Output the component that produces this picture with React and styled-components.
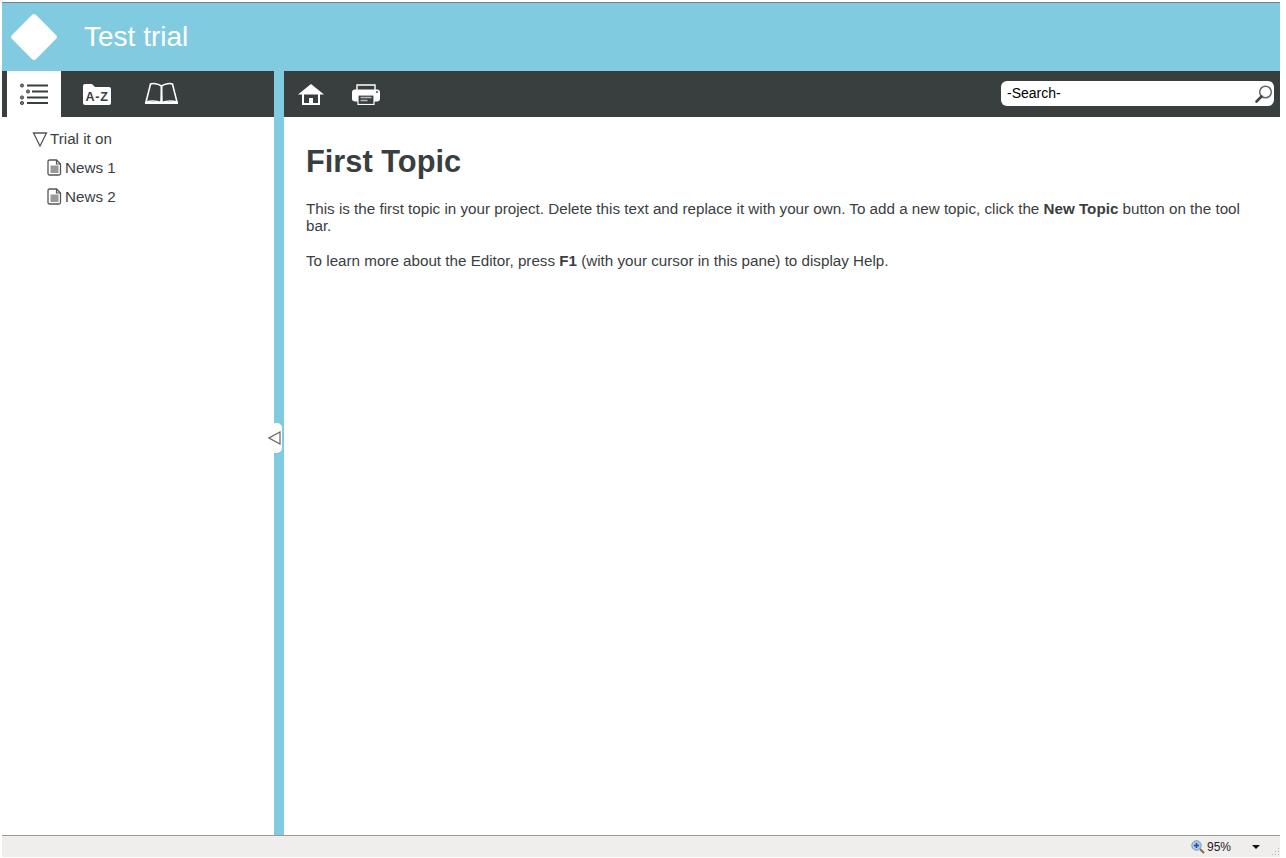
import React from "react";
import styled, { createGlobalStyle } from "styled-components";

const Global = createGlobalStyle`
  html, body { margin: 0; padding: 0; background: #fff; overflow: hidden; }
  body { font-family: "Liberation Sans", Arial, sans-serif; }
  * { box-sizing: border-box; }
`;
const Page = styled.div`
  width: 1286px; height: 858px; padding: 2px 6px 1px 2px;
  display: flex; flex-direction: column; background: #fff;
`;
const Header = styled.header`
  height: 69px; flex: none; background: #81cbe1; border-top: 1px solid #7d7d85;
  display: flex; align-items: center; padding: 0 0 0 7px; gap: 25px; color: #fff;
`;
const Logo = styled.svg`width: 50px; height: 50px; display: block; flex: none;`;
const Title = styled.h1`margin: 0; font-size: 28px; font-weight: 400; line-height: 32px;`;
const Toolbars = styled.div`height: 46px; flex: none; display: flex; background: #393e3f;`;
const NavTabs = styled.nav`
  width: 272px; flex: none; display: flex; padding-left: 5px;
`;
const Tab = styled.div`
  width: ${p => p.$w}px; height: 46px; display: flex; align-items: center; justify-content: center;
  background: ${p => p.$active ? "#fff" : "transparent"};
`;
const Main = styled.div`flex: 1; display: flex; min-height: 0;`;
const ToolArea = styled.div`
  flex: 1; display: flex; align-items: center; padding: 0 6px 0 10px; border-left: 10px solid #81cbe1;
`;
const ToolIcon = styled.div`
  width: ${p => p.$w}px; height: 46px; display: flex; align-items: center; justify-content: center; flex: none;
`;
const SearchBox = styled.div`
  width: 273px; height: 25px; margin-left: auto; margin-bottom: 1px; border-radius: 6px; background: #fff;
  display: flex; align-items: center; justify-content: space-between; padding: 0 0 2px 6px;
  color: #000; font-size: 14px;
`;
const SearchIcon = styled.svg`width: 20px; height: 20px; flex: none; margin-bottom: -2px;`;
const Sidebar = styled.aside`
  width: 272px; flex: none; padding-top: 7px; position: relative; color: #393e3f; font-size: 15.2px;
`;
const TreeRow = styled.div`
  height: 29px; display: flex; align-items: center; padding-left: ${p => p.$indent}px; gap: ${p => p.$gap}px;
`;
const Handle = styled.div`
  position: absolute; right: -8px; top: 306px; width: 15px; height: 30px; background: #fff;
  border-radius: 0 5px 5px 0; display: flex; align-items: center; justify-content: center;
`;
const Splitter = styled.div`width: 10px; flex: none; background: #81cbe1;`;
const Content = styled.main`flex: 1; padding: 26px 30px 0 22px; color: #393e3f; font-size: 15.2px; line-height: 17px;`;
const Heading = styled.h2`margin: 0 0 19px; font-size: 30.8px; line-height: 38px; font-weight: 700;`;
const Para = styled.p`margin: 0 0 18px;`;
const StatusBar = styled.footer`
  height: 22px; flex: none; background: #f0eded; border-top: 1px solid #9a9a9a;
  display: flex; align-items: center; justify-content: flex-end; color: #222; font-size: 12px;
`;
const Zoom = styled.div`display: flex; align-items: center; gap: 2px; margin-right: 21px;`;
const Caret = styled.div`
  width: 0; height: 0; border-left: 4px solid transparent; border-right: 4px solid transparent;
  border-top: 4px solid #111; margin-right: 20px;
`;
const Grip = styled.svg`width: 8px; height: 8px; position: absolute; right: 6px; bottom: 2px;`;

const FileIcon = () => (
  <svg width="15" height="17" viewBox="0 0 15 17">
    <path d="M2.500 1h7l4 4v9.500a1.500 1.500 0 0 1-1.500 1.500H2.500A1.500 1.500 0 0 1 1 14.500v-12A1.500 1.500 0 0 1 2.500 1z" fill="#fff" stroke="#555" strokeWidth="1.300"/>
    <path d="M9.500 1v4h4" fill="none" stroke="#555" strokeWidth="1.200"/>
    <rect x="3.500" y="6.500" width="8" height="7.500" fill="#999"/>
  </svg>
);

export default function App() {
  return (
    <Page>
      <Global />
      <Header>
        <Logo viewBox="0 0 50 50">
          <rect x="8" y="8" width="34" height="34" rx="3" fill="#fff" transform="rotate(45 25 25)"/>
        </Logo>
        <Title>Test trial</Title>
      </Header>
      <Toolbars>
        <NavTabs>
          <Tab $w={54} $active>
            <svg width="30" height="22" viewBox="0 0 30 22">
              <g fill="#777" stroke="#44494a">
                <circle cx="3" cy="2.500" r="1.600"/>
                <circle cx="9" cy="8.500" r="1.600"/>
                <circle cx="3" cy="14.500" r="1.600"/>
                <circle cx="3" cy="20" r="1.600"/>
              </g>
              <path d="M8 2.500h21M13 8.500h16M8 14.500h21M8 20h21" stroke="#393e3f" strokeWidth="1.800"/>
            </svg>
          </Tab>
          <Tab $w={74}>
            <svg width="30" height="23" viewBox="0 0 30 23" style={{ marginLeft: -2 }}>
              <path d="M1 3a2 2 0 0 1 2-2h7l3 3h14a2 2 0 0 1 2 2v14a2 2 0 0 1-2 2H3a2 2 0 0 1-2-2z" fill="#fff"/>
              <text x="15" y="18" textAnchor="middle" fontFamily="Liberation Sans, sans-serif" fontWeight="700" fontSize="12.500" fill="#393e3f" letterSpacing="0.800">A-Z</text>
            </svg>
          </Tab>
          <Tab $w={54}>
            <svg width="33" height="23" viewBox="0 0 33 23" style={{ marginLeft: -1, marginTop: -2 }}>
              <path d="M16.500 4C13 1.500 8 1 5.500 2L1 20c5-1.500 11-1 15 .5z" fill="none" stroke="#fff" strokeWidth="1.600"/>
              <path d="M16.500 4C20 1.500 25 1 27.500 2L32 20c-5-1.500-11-1-15 .5z" fill="none" stroke="#fff" strokeWidth="1.600"/>
              <path d="M0 22h33v-2H19l-2.500 1-2.500-1H0z" fill="#fff"/>
            </svg>
          </Tab>
        </NavTabs>
        <ToolArea>
          <ToolIcon $w={34}>
            <svg width="26" height="21" viewBox="0 0 26 21">
              <path d="M13 0L0 10.500h26z" fill="#fff"/>
              <path d="M4 10v11h18V10h-2v9H6v-9z" fill="#fff"/>
              <rect x="11" y="14" width="4" height="6" fill="#fff"/>
            </svg>
          </ToolIcon>
          <ToolIcon $w={76}>
            <svg width="28" height="21" viewBox="0 0 28 21">
              <path d="M5 6V1h18v5" fill="none" stroke="#fff" strokeWidth="1.400"/>
              <rect x="0" y="5.500" width="28" height="12" rx="3" fill="#fff"/>
              <rect x="6" y="11" width="16" height="9.500" fill="#393e3f" stroke="#fff" strokeWidth="1.200"/>
              <path d="M8.500 13.500h11M8.500 16.500h7" stroke="#bbb" strokeWidth="1.500"/>
              <circle cx="25" cy="8" r="0.900" fill="#393e3f"/>
            </svg>
          </ToolIcon>
          <SearchBox>
            -Search-
            <SearchIcon viewBox="0 0 20 20">
              <circle cx="11.500" cy="8" r="5.800" fill="none" stroke="#666" strokeWidth="1.500"/>
              <path d="M7.500 12.500L2.500 17.500" stroke="#444" strokeWidth="2.600" strokeLinecap="round"/>
            </SearchIcon>
          </SearchBox>
        </ToolArea>
      </Toolbars>
      <Main>
        <Sidebar>
          <TreeRow $indent={30} $gap={2}>
            <svg width="16" height="16" viewBox="0 0 16 16">
              <path d="M1.500 2h13L8 15z" fill="none" stroke="#555" strokeWidth="1.300"/>
            </svg>
            Trial it on
          </TreeRow>
          <TreeRow $indent={45} $gap={3}><FileIcon />News 1</TreeRow>
          <TreeRow $indent={45} $gap={3}><FileIcon />News 2</TreeRow>
          <Handle>
            <svg width="13" height="14" viewBox="0 0 13 14">
              <path d="M12 1v12L1 7z" fill="none" stroke="#666" strokeWidth="1.200"/>
            </svg>
          </Handle>
        </Sidebar>
        <Splitter />
        <Content>
          <Heading>First Topic</Heading>
          <Para>This is the first topic in your project. Delete this text and replace it with your own. To add a new topic, click the <b>New Topic</b> button on the tool bar.</Para>
          <Para>To learn more about the Editor, press <b>F1</b> (with your cursor in this pane) to display Help.</Para>
        </Content>
      </Main>
      <StatusBar>
        <Zoom>
          <svg width="14" height="14" viewBox="0 0 14 14">
            <path d="M9 9l4 4" stroke="#8a6a45" strokeWidth="2"/>
            <circle cx="5.500" cy="5.500" r="4.700" fill="#a9c9ea" stroke="#7d96b0"/>
            <path d="M5.500 3v5M3 5.500h5" stroke="#1f4fa8" strokeWidth="1.600"/>
          </svg>
          95%
        </Zoom>
        <Caret />
        <Grip viewBox="0 0 8 8">
          <g fill="#b5b5b5"><rect x="6" y="0" width="1" height="1"/><rect x="3" y="3" width="1" height="1"/><rect x="6" y="3" width="1" height="1"/><rect x="0" y="6" width="1" height="1"/><rect x="3" y="6" width="1" height="1"/><rect x="6" y="6" width="1" height="1"/></g>
        </Grip>
      </StatusBar>
    </Page>
  );
}
